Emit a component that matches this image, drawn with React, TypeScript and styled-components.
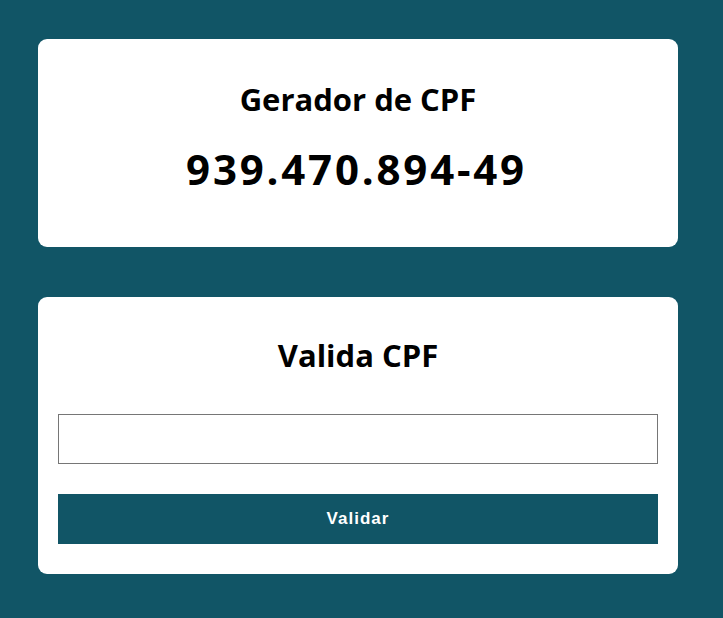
import React from "react";
import styled, { createGlobalStyle } from "styled-components";

const Global = createGlobalStyle`
  html, body { margin: 0; padding: 0; }
  body { background: #115566; font-family: "Open Sans", sans-serif; min-height: 618px; }
`;

const Page = styled.main`
  display: flex;
  flex-direction: column;
  gap: 50px;
  padding: 39px 0 40px 38px;
  width: 640px;
`;

const Card = styled.section<{ $top: number; $bottom: number; $gap: number }>`
  background: #ffffff;
  border-radius: 9px;
  padding: ${(p) => p.$top}px 20px ${(p) => p.$bottom}px;
  display: flex;
  flex-direction: column;
  align-items: stretch;
  gap: ${(p) => p.$gap}px;
`;

const Title = styled.h2`
  margin: 0;
  font-family: "Open Sans", sans-serif;
  font-weight: 700;
  font-size: 31px;
  line-height: 40px;
  text-align: center;
  color: #000;
`;

const Number = styled.p`
  margin: 0 0 0 -3px;
  font-family: "Open Sans", sans-serif;
  font-weight: 700;
  font-size: 42px;
  letter-spacing: 2.8px;
  line-height: 56px;
  text-align: center;
  color: #000;
`;

const Form = styled.form`
  display: flex;
  flex-direction: column;
  gap: 30px;
`;

const Input = styled.input`
  box-sizing: border-box;
  height: 50px;
  width: 100%;
  border: 1px solid #767676;
  border-radius: 0;
  padding: 0 10px;
  font-size: 16px;
  margin: 0;
`;

const Button = styled.button`
  height: 50px;
  width: 100%;
  border: none;
  background: #115566;
  color: #fff;
  font-family: "Liberation Sans", Arial, sans-serif;
  font-weight: 700;
  font-size: 17px;
  letter-spacing: 1px;
  margin: 0;
  cursor: pointer;
`;

export default function App() {
  return (
    <>
      <Global />
      <Page>
        <Card $top={40} $bottom={50} $gap={22}>
          <Title>Gerador de CPF</Title>
          <Number>939.470.894-49</Number>
        </Card>
        <Card $top={38} $bottom={30} $gap={39}>
          <Title>Valida CPF</Title>
          <Form onSubmit={(e) => e.preventDefault()}>
            <Input />
            <Button type="submit">Validar</Button>
          </Form>
        </Card>
      </Page>
    </>
  );
}
